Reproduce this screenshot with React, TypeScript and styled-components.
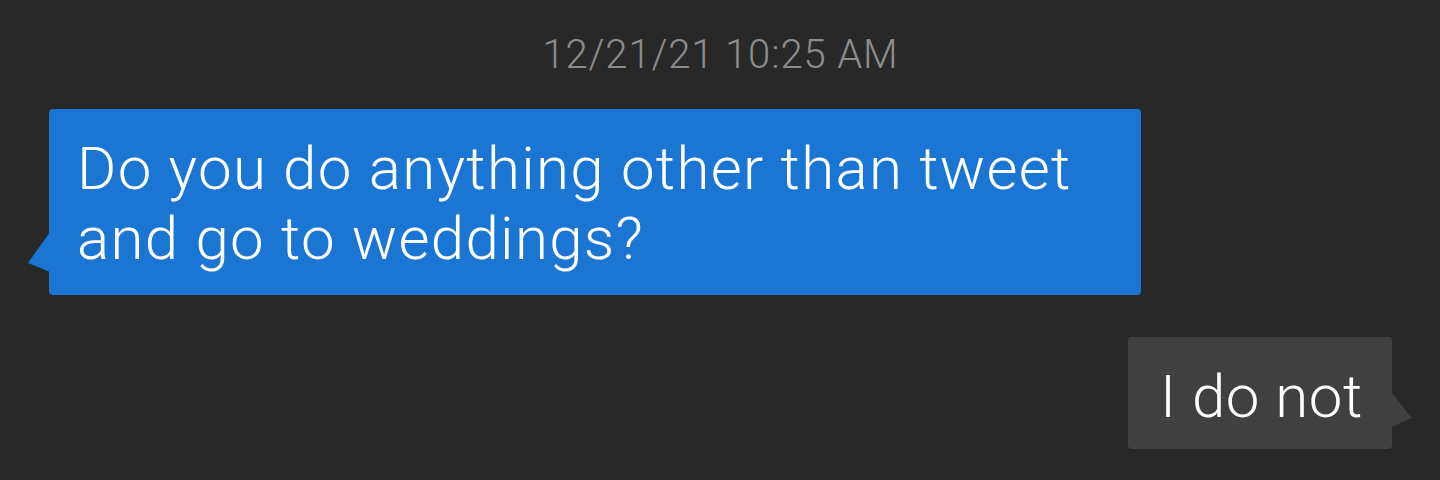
import React from 'react';
import styled, { createGlobalStyle } from 'styled-components';

const GlobalStyle = createGlobalStyle`
  html, body {
    margin: 0;
    padding: 0;
    background-color: #282828;
  }

  body {
    font-family: Roboto, 'Liberation Sans', sans-serif;
    font-weight: 300;
  }
`;

const Thread = styled.div`
  display: flex;
  flex-direction: column;
  width: 1440px;
  height: 480px;
  padding: 31px 48px 0 49px;
  box-sizing: border-box;
  overflow: hidden;
`;

const Timestamp = styled.div`
  align-self: center;
  color: #8c8c8c;
  font-size: 40px;
  line-height: 47px;
  letter-spacing: 0.022em;
  margin-bottom: 31px;
`;

const Bubble = styled.div<{ $outgoing?: boolean }>`
  position: relative;
  align-self: ${({ $outgoing }) => ($outgoing ? 'flex-end' : 'flex-start')};
  max-width: 1092px;
  box-sizing: border-box;
  padding: ${({ $outgoing }) => ($outgoing ? '25px 29px 17px 32px' : '25px 28px 21px 28px')};
  border-radius: 4px;
  background-color: ${({ $outgoing }) => ($outgoing ? '#404040' : '#1a76d2')};
  color: #ffffff;
  font-size: 60px;
  line-height: 70px;
  letter-spacing: ${({ $outgoing }) => ($outgoing ? '0.01em' : '0.022em')};
  margin-bottom: ${({ $outgoing }) => ($outgoing ? '0' : '42px')};

  /* speech tail */
  &::before {
    content: '';
    position: absolute;
    background-color: inherit;
    ${({ $outgoing }) =>
      $outgoing
        ? `
      right: -20px;
      bottom: 22px;
      width: 21px;
      height: 35px;
      clip-path: polygon(0 0, 21px 26px, 0 35px);
    `
        : `
      left: -21px;
      bottom: 23px;
      width: 22px;
      height: 40px;
      clip-path: polygon(22px 0, 0 31px, 22px 40px);
    `}
  }
`;

export default function App() {
  return (
    <>
      <GlobalStyle />
      <Thread>
        <Timestamp>12/21/21 10:25 AM</Timestamp>
        <Bubble>Do you do anything other than tweet and go to weddings?</Bubble>
        <Bubble $outgoing>I do not</Bubble>
      </Thread>
    </>
  );
}
